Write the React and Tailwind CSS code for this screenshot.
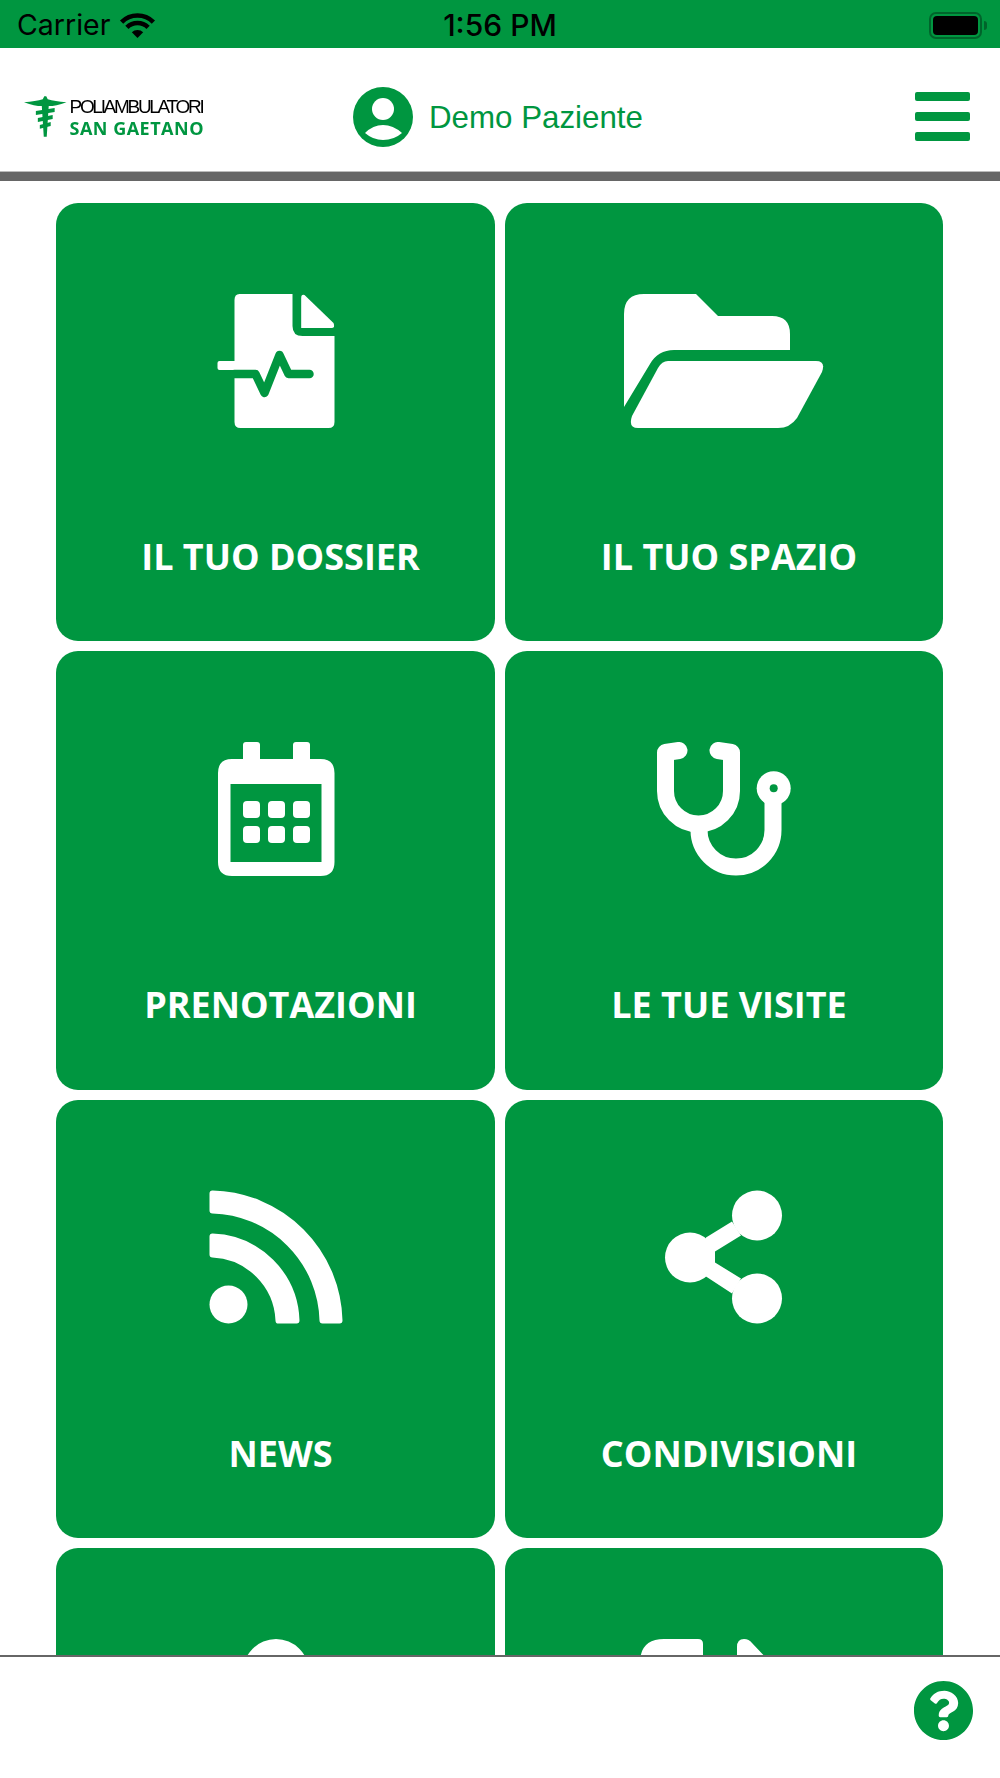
import { FaQuestionCircle } from "react-icons/fa"

const GREEN = "#009640"

function FileIcon() {
  return (
    <svg viewBox="-14.5 24 200 134" width="200" height="134" fill="#fff" aria-hidden="true">
      <path d="M49 24H102V56Q102 66 112 66H144V152Q144 158 138 158H50Q44 158 44 152V30Q44 24 49 24Z" />
      <path d="M110.7 28Q110.7 24 114 25L143 53Q145 58 141 58H110.7Z" />
      <rect x="27" y="91" width="22" height="9" rx="2" />
      <path
        d="M44 104H65L74 123L89 85L98 104H119"
        fill="none"
        stroke={GREEN}
        strokeWidth="8.5"
        strokeLinecap="round"
        strokeLinejoin="round"
      />
      <rect x="40" y="100" width="6" height="8" fill={GREEN} />
    </svg>
  )
}

function FolderIcon() {
  return (
    <svg viewBox="24 24 200 134" width="200" height="134" fill="#fff" aria-hidden="true">
      <path d="M24 137V44Q24 24 44 24H96L118 46H172Q190 46 190 64V80H74Q58 80 50 94Z" />
      <path d="M68 91H216Q226 91 222 102L197 148Q190 158 178 158H38Q28 158 32 146L58 98Q62 91 68 91Z" />
    </svg>
  )
}

function CalendarIcon() {
  return (
    <svg viewBox="-14.5 17 200 134" width="200" height="134" fill="#fff" aria-hidden="true">
      <path
        fillRule="evenodd"
        d="M41.5 34H130Q144 34 144 48V137Q144 151 130 151H41.5Q27.5 151 27.5 137V48Q27.5 34 41.5 34ZM40 59V137H131V59Z"
      />
      <rect x="52.5" y="17" width="17" height="22" rx="3" />
      <rect x="102.5" y="17" width="17" height="22" rx="3" />
      <rect x="52.5" y="76" width="17" height="17" rx="4" />
      <rect x="77.5" y="76" width="17" height="17" rx="4" />
      <rect x="102.5" y="76" width="17" height="17" rx="4" />
      <rect x="52.5" y="101" width="17" height="17" rx="4" />
      <rect x="77.5" y="101" width="17" height="17" rx="4" />
      <rect x="102.5" y="101" width="17" height="17" rx="4" />
    </svg>
  )
}

function StethoscopeIcon() {
  return (
    <svg viewBox="-6 17 200 134" width="200" height="134" fill="none" aria-hidden="true">
      <path
        d="M49 25.5L35.5 27.5V66A33 33 0 0 0 101.5 66V27.5L88 25.5"
        stroke="#fff"
        strokeWidth="17"
        strokeLinecap="round"
        strokeLinejoin="round"
      />
      <path d="M69 100V105A37 37 0 0 0 143 105V70" stroke="#fff" strokeWidth="17" />
      <circle cx="143.7" cy="63.3" r="17" fill="#fff" />
      <circle cx="143.7" cy="63.3" r="4" fill={GREEN} />
    </svg>
  )
}

function RssIcon() {
  return (
    <svg viewBox="-14.5 20.5 200 134" width="200" height="134" fill="#fff" className="overflow-visible" aria-hidden="true">
      <circle cx="38" cy="134" r="19" />
      <path
        d="M22 66A87 87 0 0 1 106 150H88A69 69 0 0 0 22 84Z"
        stroke="#fff"
        strokeWidth="6"
        strokeLinejoin="round"
      />
      <path
        d="M22 23A130 130 0 0 1 149 150H132A113 113 0 0 0 22 40Z"
        stroke="#fff"
        strokeWidth="6"
        strokeLinejoin="round"
      />
    </svg>
  )
}

function ShareIcon() {
  return (
    <svg viewBox="-16 20.5 200 134" width="200" height="134" fill="#fff" className="overflow-visible" aria-hidden="true">
      <circle cx="117" cy="45" r="25" />
      <circle cx="50" cy="87" r="25" />
      <circle cx="117" cy="128" r="25" />
      <path d="M66 67L92 51L101 65L75 81V92L101 108L92 123L66 106Z" />
    </svg>
  )
}

function UserIcon() {
  return (
    <svg viewBox="-14.5 0 200 134" width="200" height="134" fill="#fff" aria-hidden="true">
      <circle cx="85.5" cy="33" r="33" />
    </svg>
  )
}

function ExportIcon() {
  return (
    <svg viewBox="0 0 200 134" width="200" height="134" fill="#fff" aria-hidden="true">
      <path d="M16 134V24Q16 0 40 0H74Q79 0 79 5V134Z" />
      <path d="M113 134V8Q113 0 120 0Q125 0 128 4L200 80V134Z" />
    </svg>
  )
}

function WifiIcon() {
  return (
    <svg viewBox="0 0 37 25" width="37" height="25" fill="none" aria-hidden="true">
      <path d="M2.6 9.1A22.5 22.5 0 0 1 34.4 9.1" stroke="#000" strokeWidth="4.6" />
      <path d="M7.9 14.4A15 15 0 0 1 29.1 14.4" stroke="#000" strokeWidth="4.6" />
      <path d="M18.5 25L12.8 19.3A8 8 0 0 1 24.2 19.3Z" fill="#000" />
    </svg>
  )
}

function Battery() {
  return (
    <div className="flex items-center gap-[2px]">
      <div className="h-[27px] w-[53px] rounded-[7px] border-2 border-[#00642b] p-[2px]">
        <div className="h-full w-full rounded-[4px] bg-black" />
      </div>
      <div className="h-[9px] w-[3px] rounded-r-sm bg-[#00642b]" />
    </div>
  )
}

function StatusBar() {
  return (
    <div className="grid h-[48px] grid-cols-3 items-center bg-[#009640] pt-[2px] font-['Inter',sans-serif] text-[28.5px] text-black">
      <div className="flex items-center gap-[9px] pl-[17px]">
        <span>Carrier</span>
        <WifiIcon />
      </div>
      <div className="text-center text-[30px] font-medium">1:56 PM</div>
      <div className="flex justify-end pr-[13px]">
        <Battery />
      </div>
    </div>
  )
}

function Logo() {
  return (
    <div className="flex w-[180px] items-center gap-[3px] blur-[0.6px]">
      <svg viewBox="0 0 43 41" width="43" height="41" fill={GREEN} aria-hidden="true">
        <path d="M0 6Q12 5 19 3L20.5 0H22.5L24 3Q31 5 43 6Q32 10 25 10L23 41H20L18 10Q11 10 0 6Z" />
        <path d="M12 15L31 12V16L12 19ZM14 22L29 19V23L14 26ZM16 29L27 26V30L16 33Z" />
      </svg>
      <div className="leading-none">
        <div className="whitespace-nowrap font-['Liberation_Sans',sans-serif] text-[19px] tracking-[-2.3px] text-black">
          POLIAMBULATORI
        </div>
        <div className="mt-[3px] whitespace-nowrap font-['Open_Sans',sans-serif] text-[18px] font-bold tracking-[0.5px] text-[#009640]">
          SAN GAETANO
        </div>
      </div>
    </div>
  )
}

function Avatar() {
  return (
    <svg viewBox="0 0 60 60" width="60" height="60" aria-hidden="true">
      <circle cx="30" cy="30" r="30" fill={GREEN} />
      <circle cx="30" cy="22" r="11" fill="#fff" />
      <path d="M12 46Q20 38 30 38Q40 38 49 46Q41 53 30 53Q20 53 12 46Z" fill="#fff" />
    </svg>
  )
}

function Header() {
  return (
    <div className="flex h-[123px] items-center pl-[24px] pr-[30px] pt-[14px]">
      <Logo />
      <div className="ml-[149px] flex items-center gap-[16px]">
        <Avatar />
        <span className="mt-[3px] font-['Liberation_Sans',sans-serif] text-[31.3px] text-[#009640]">Demo Paziente</span>
      </div>
      <div className="ml-auto flex w-[55px] flex-col gap-[11px]">
        <div className="h-[9px] rounded-[2px] bg-[#009640]" />
        <div className="h-[9px] rounded-[2px] bg-[#009640]" />
        <div className="h-[9px] rounded-[2px] bg-[#009640]" />
      </div>
    </div>
  )
}

const TILES = [
  { label: "IL TUO DOSSIER", icon: <FileIcon /> },
  { label: "IL TUO SPAZIO", icon: <FolderIcon /> },
  { label: "PRENOTAZIONI", icon: <CalendarIcon /> },
  { label: "LE TUE VISITE", icon: <StethoscopeIcon /> },
  { label: "NEWS", icon: <RssIcon /> },
  { label: "CONDIVISIONI", icon: <ShareIcon /> },
  { label: "", icon: <UserIcon /> },
  { label: "", icon: <ExportIcon /> },
]

function Tile({ label, icon }) {
  return (
    <div className="flex h-[438.4px] flex-col items-center rounded-[22px] bg-[#009640] pt-[91px]">
      {icon}
      <div className="mt-[104px] pl-[10px] font-['Open_Sans',sans-serif] text-[36px] font-bold leading-[50px] text-white">
        {label}
      </div>
    </div>
  )
}

export default function App() {
  return (
    <div className="flex h-[1778px] flex-col overflow-hidden bg-white">
      <StatusBar />
      <Header />
      <div className="h-[10px] border-t border-[#bbbbbb] bg-[#666666]" />
      <main className="min-h-0 flex-1 overflow-hidden pl-[56px] pt-[22px]">
        <div className="grid grid-cols-[439px_438px] gap-[10px]">
          {TILES.map((tile, i) => (
            <Tile key={i} label={tile.label} icon={tile.icon} />
          ))}
        </div>
      </main>
      <footer className="flex h-[123px] items-start justify-end border-t-2 border-[#666666] bg-white pr-[26px] pt-[23px]">
        <FaQuestionCircle size={61} color={GREEN} />
      </footer>
    </div>
  )
}
